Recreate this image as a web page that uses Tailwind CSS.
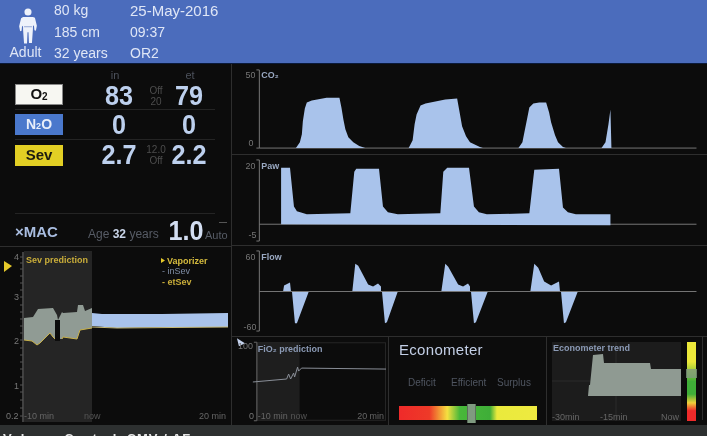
<!doctype html>
<html><head><meta charset="utf-8"><script src="https://cdn.jsdelivr.net/npm/@tailwindcss/browser@4"></script></head>
<body class="m-0 bg-[#0c0c0c] overflow-hidden">
<div class="w-[707px] h-[436px] flex flex-col font-['Liberation_Sans',Arial,sans-serif] overflow-hidden blur-[0.5px]">
  <!-- header -->
  <header class="h-[64px] shrink-0 bg-[#4b6cbc] flex text-[#dfe6f6] text-[14px] leading-[21.500px] border-b border-[#0a1a3a]">
    <div class="w-[54px] flex flex-col items-center">
      <svg viewBox="0 0 24 36" class="w-[24px] h-[36px] mt-[8px] ml-[1px]" fill="#eef2fb"><circle cx="12" cy="4" r="3.600"/><path d="M7 9h10l2 1 2 8-1 5-1.500-.500-.500-5-1 1v3l-1 14h-3l-.500-11h-1L11 36H8L7 22v-3l-1-1-.500 5-1.500.500-1-5 2-8z"/><path d="M8 19h8" stroke="#7d93cc" stroke-width=".8"/></svg>
      <div class="mt-[-2px] ml-[-3px]">Adult</div>
    </div>
    <div class="w-[76px]">
      <div>80 kg</div><div>185 cm</div><div>32 years</div>
    </div>
    <div><div class="text-[15px]">25-May-2016</div><div>09:37</div><div>OR2</div></div>
  </header>
  <!-- main -->
  <main class="h-[361px] shrink-0 flex">
    <section class="w-[232px] shrink-0 border-r border-[#2e2e2e] flex flex-col">
      <div class="h-[183px] shrink-0 border-b border-[#2e2e2e] pl-[15px] flex flex-col">
        <div class="h-[16px] shrink-0 flex items-start pt-[6px] text-[11px] leading-[10px] text-[#4d525c]">
          <span class="w-[82px]"></span><span class="w-[36px] text-center">in</span><span class="w-[39px]"></span><span class="w-[36px] text-center">et</span>
        </div>
        <div class="w-[200px] h-[30px] shrink-0 flex items-center border-b border-[#242424]">
          <div class="w-[48px] h-[21px] bg-[#f7f7f2] border border-[#888] text-[#111] font-bold text-[15px] flex items-center justify-center">O<sub class="text-[10px] leading-none">2</sub></div>
          <div class="ml-[38px] w-[36px] flex justify-center pt-[3px] text-[#bdd0ee] font-bold text-[28px] leading-none scale-x-90">83</div>
          <div class="ml-[2px] w-[34px] pt-[3px] text-center text-[#4d4d4d] text-[10px] leading-[11px]">Off<br>20</div>
          <div class="w-[32px] flex justify-center pt-[3px] text-[#bdd0ee] font-bold text-[28px] leading-none scale-x-90">79</div>
        </div>
        <div class="w-[200px] h-[30px] shrink-0 flex items-center border-b border-[#242424]">
          <div class="w-[48px] h-[21px] bg-[#4a78cc] text-[#e8eefa] font-bold text-[14px] flex items-center justify-center">N<sub class="text-[9px] leading-none">2</sub>O</div>
          <div class="ml-[38px] w-[36px] flex justify-center text-[#bdd0ee] font-bold text-[28px] leading-none scale-x-90">0</div>
          <div class="ml-[2px] w-[34px]"></div>
          <div class="w-[32px] flex justify-center text-[#bdd0ee] font-bold text-[28px] leading-none scale-x-90">0</div>
        </div>
        <div class="w-[200px] h-[30px] shrink-0 flex items-center">
          <div class="w-[48px] h-[21px] bg-[#e2cf24] text-[#1c1c10] font-bold text-[15px] flex items-center justify-center">Sev</div>
          <div class="ml-[38px] w-[36px] flex justify-center text-[#bdd0ee] font-bold text-[28px] leading-none scale-x-90">2.7</div>
          <div class="ml-[2px] w-[34px] text-center text-[#4d4d4d] text-[10px] leading-[11px]">12.0<br>Off</div>
          <div class="w-[32px] flex justify-center text-[#bdd0ee] font-bold text-[28px] leading-none scale-x-90">2.2</div>
        </div>
        <div class="w-[200px] mt-[43px] h-[33px] shrink-0 border-t border-[#242424] flex items-center relative">
          <div class="w-[73px] shrink-0 text-[#a9bde0] font-bold text-[15px] pt-[4px]">×MAC</div>
          <div class="w-[79px] shrink-0 text-[#575c66] text-[12px] pt-[7px] whitespace-nowrap">Age <span class="text-[#c9d4e8] font-bold">32</span> years</div>
          <div class="w-[38px] shrink-0 flex justify-center text-[#d3def2] font-bold text-[28px] leading-none scale-x-90 pt-[1px]">1.0</div>
          <div class="text-[#575c66] text-[11px] pt-[10px] shrink-0">Auto</div>
          <div class="absolute right-[-12px] top-[8px] w-[8px] h-px bg-[#555]"></div>
        </div>
      </div>
      <svg viewBox="0 247 232 178" class="w-[232px] h-[178px] block" font-size="9" font-family="Liberation Sans" fill="#6a6a6a">
        <rect x="24" y="251" width="68" height="171" fill="#252525"/>
        <path d="M4 261l8 5-8 6z" fill="#e6c92a"/>
        <path d="M23 252v170" stroke="#777" stroke-width="1"/>
        <path d="M20 257h3M20 263h3M20 269h3M20 276h3M20 283h3M20 290h3M20 297h3M20 305h3M20 312h3M20 319h3M20 326h3M20 333h3M20 340h3M20 348h3M20 355h3M20 362h3M20 369h3M20 377h3M20 385h3M20 392h3M20 400h3M20 408h3M20 416h3" stroke="#555"/>
        <text x="14" y="260" fill="#777">4</text><text x="14" y="300" fill="#777">3</text><text x="14" y="344" fill="#777">2</text><text x="14" y="389" fill="#777">1</text><text x="6" y="419" fill="#777">0.2</text>
        <path d="M24 318L33 317L38 309L53 308L57 315L58 320L62 312L63 313L77 312L78 305L83 305L85 311L92 308V328L80 330L77 339L63 337L62 339L55 339L53 337L50 333L45 338L40 343L37 345L32 341L24 340z" fill="#909b94"/>
        <path d="M55 320h5v21h-5z" fill="#0c0c0c"/>
        <path d="M24 340L32 341L37 345L40 343L45 338L50 333L53 337L55 339M62 339L63 337L77 339L80 330L92 328" fill="none" stroke="#c9b24a" stroke-width="1"/>
        <path d="M92 313l10 1 60 0 66-1v14l-66 0-45 1-25-2z" fill="#a9c3eb"/>
        <path d="M92 327l25 1 111-1" fill="none" stroke="#c9bc78"/>
        <text x="26" y="263" fill="#c9ad3a" font-size="9" font-weight="bold">Sev prediction</text>
        <path d="M161 258l4 2.500-4 2.500z" fill="#e6c92a"/>
        <text x="167" y="264" fill="#d5bb3e" font-weight="bold">Vaporizer</text>
        <text x="162" y="274" fill="#7f8da5">- inSev</text>
        <text x="162" y="285" fill="#c9ad3a" font-weight="bold">- etSev</text>
        <text x="24" y="419" fill="#666">-10 min</text><text x="84" y="419" fill="#555">now</text><text x="199" y="419" fill="#666">20 min</text>
      </svg>
    </section>
    <section class="flex-1 flex flex-col">
      <svg viewBox="232 64 475 91" class="w-[475px] h-[91px] block border-b border-[#2e2e2e]" font-size="9" font-family="Liberation Sans">
        <path d="M257 70v79M254 70h3M254 149h3" stroke="#777" fill="none"/>
        <text x="243" y="78" fill="#777">50</text><text x="246" y="147" fill="#777">0</text>
        <text x="259" y="78" fill="#9aa9c2" font-weight="bold">CO₂</text>
        <path d="M257 149H699" stroke="#777"/>
        <path fill="#a9c3eb" d="M294 149L298 143L300 135L301 122L303 109L305 103L310 101L325 98L338 98L340 108L342 120L344 130L347 138L352 143L358 147L364 149zM408 149L412 141L414 125L416 115L420 106L425 104L445 100L457 99L459 110L462 127L466 137L470 143L480 148L483 149zM519 149L523 143L525 133L528 118L530 108L534 104L540 103L547 103L550 113L552 123L556 136L559 143L564 148L567 149zM603 149L607 143L610 125L612 110L613 149z"/>
      </svg>
      <svg viewBox="232 155 475 91" class="w-[475px] h-[91px] block border-b border-[#2e2e2e]" font-size="9" font-family="Liberation Sans">
        <path d="M257 160v82M254 160h3M254 242h3" stroke="#777" fill="none"/>
        <text x="243" y="169" fill="#777">20</text><text x="246" y="239" fill="#777">-5</text>
        <text x="259" y="169" fill="#9aa9c2" font-weight="bold">Paw</text>
        <path d="M257 225H699" stroke="#777"/>
        <path fill="#a9c3eb" d="M279 225v-57h9l4 39 3 5 10 3 44-1 4-42 2-3h23l4 38 5 6 10 2 43-1 3-42 4-4h22l5 39 5 6 8 2 43-1 5-44 25-1 4 39 5 5 8 2h35v11z"/>
      </svg>
      <svg viewBox="232 246 475 91" class="w-[475px] h-[91px] block border-b border-[#2e2e2e]" font-size="9" font-family="Liberation Sans">
        <path d="M257 251v81M254 251h3M254 332h3" stroke="#777" fill="none"/>
        <text x="243" y="260" fill="#777">60</text><text x="241" y="331" fill="#777">-60</text>
        <text x="259" y="260" fill="#9aa9c2" font-weight="bold">Flow</text>
        <path fill="#a9c3eb" d="M281 292l1-6 6-3 1 9zM290 292l3 32h2l12-32zM351 292l3-28 3 2 10 19 5 2 5-3 3 3v5zM381 292l3 32 2-1 11-31zM441 292l4-28 3 3 10 18 5 2 5-3 2 3v5zM471 292l3 32 2-1 12-31zM531 292l4-28 4 4 6 14 7 4 8-4 1 10zM562 292l3 32 2-1 12-31z"/>
        <path d="M257 292H699" stroke="#777"/>
      </svg>
      <div class="flex h-[88px]">
        <svg viewBox="232 337 157 88" class="w-[157px] h-[88px] block border-r border-[#2e2e2e]" font-size="9" font-family="Liberation Sans">
          <rect x="257" y="342" width="43" height="79" fill="#1e1e1e"/>
          <rect x="257.500" y="342.500" width="129" height="78" fill="none" stroke="#262626"/>
          <path d="M237 338l8 5-6 3z" fill="#c5d3ee"/>
          <path d="M257 342v79M254 342h3M254 421h3" stroke="#666" fill="none"/>
          <text x="238" y="349" fill="#777">100</text><text x="249" y="419" fill="#777">0</text>
          <text x="258" y="352" fill="#8b9ab5" font-weight="bold">FiO₂ prediction</text>
          <path d="M253 382l34-3 2-5 2 5 3-6 1 4 3-10 1 4 3-3 85 1" fill="none" stroke="#8a8f98"/>
          <text x="258" y="419" fill="#666">-10 min</text><text x="291" y="419" fill="#555">now</text><text x="358" y="419" fill="#666">20 min</text>
        </svg>
        <div class="w-[158px] shrink-0 border-r border-[#2e2e2e] relative pl-[10px]">
          <div class="text-[15px] leading-[18px] mt-[4px] tracking-[0.3px] text-[#c3cfe6]">Econometer</div>
          <div class="flex w-[138px] mt-[19px] text-[#4f5560] text-[10px] leading-[10px] pl-[9px]"><span class="w-[43px]">Deficit</span><span class="w-[46px]">Efficient</span><span>Surplus</span></div>
          <div class="w-[138px] h-[14px] mt-[18px] bg-[linear-gradient(90deg,#ef2a2a_0%,#ee3a28_22%,#f5e040_35%,#48b83a_44%,#3fae38_66%,#eaea3c_71%,#eeea40_100%)]"></div>
          <div class="absolute left-[78px] top-[67px] w-[9px] h-[19px] bg-[#7f9a80] border-x border-[#5b6d5b]"></div>
        </div>
        <div class="flex-1 flex pl-[5px] pt-[5px] gap-[6px]">
          <svg viewBox="552 342 129 79" class="w-[129px] h-[79px] block" font-size="9" font-family="Liberation Sans">
            <rect x="552" y="342" width="129" height="79" fill="#1c1c1c"/>
            <path d="M552 381H681M616 342V421" stroke="#2a2a2a"/>
            <path d="M588 396l1-11h1l3-30 10-1 1 9h46l1 6h30v27z" fill="#8f9a92"/>
            <text x="553" y="351" fill="#8b9ab5" font-weight="bold">Econometer trend</text>
            <text x="552" y="420" fill="#666">-30min</text><text x="600" y="420" fill="#666">-15min</text><text x="661" y="420" fill="#666">Now</text>
          </svg>
          <div class="relative w-[9px] h-[79px] bg-[linear-gradient(180deg,#ece83a_0%,#ece83a_25%,#3fae38_50%,#3fae38_66%,#f0d03a_77%,#ee2a2a_87%,#ee2a2a_100%)]">
            <div class="absolute left-[-1px] top-[27px] w-[11px] h-[9px] bg-[#7f9a80]/80"></div>
          </div>
          <div class="w-px h-[83px] mt-[-5px] bg-[#2e2e2e]"></div>
        </div>
      </div>
    </section>
  </main>
  <footer class="flex-1 bg-[#2d3030] text-[#e8e8e8] font-bold text-[13px] leading-[13px] pl-[3px] pt-[7px] whitespace-pre overflow-hidden tracking-[1px]">Volume  Control  CMV / AF</footer>
</div>
</body></html>
